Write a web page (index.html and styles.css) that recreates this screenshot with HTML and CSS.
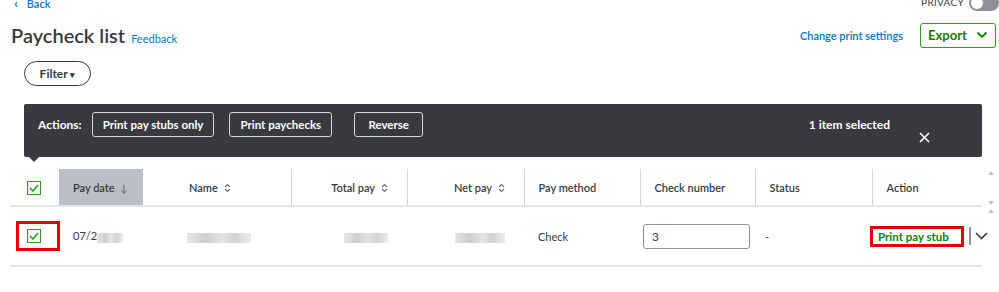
FILE: index.html
```html
<!DOCTYPE html>
<html lang="en">
<head>
    <meta charset="UTF-8">
    <title>Paycheck list</title>
    <link rel="stylesheet" href="styles.css">
</head>
<body>
    <div class="topbar">
        <a class="back-link" href="#"><span class="back-chevron">&lsaquo;</span> Back</a>
        <div class="privacy">
            <span>PRIVACY</span>
            <span class="toggle"><span class="knob"></span></span>
        </div>
    </div>

    <div class="titlebar">
        <div class="title-left">
            <h1>Paycheck list</h1>
            <a class="feedback" href="#">Feedback</a>
        </div>
        <div class="title-right">
            <a class="print-settings" href="#">Change print settings</a>
            <button class="export-btn">Export
                <svg width="12" height="8" viewBox="0 0 12 8"><path d="M1.5 1.5 L6 6 L10.5 1.5" fill="none" stroke="#108000" stroke-width="1.8"/></svg>
            </button>
        </div>
    </div>

    <div class="filter-row">
        <button class="filter-btn">Filter <span class="caret">&#9662;</span></button>
    </div>

    <!-- Batch actions bar -->
    <div class="action-bar">
        <div class="actions">
            <span class="actions-label">Actions:</span>
            <button class="bar-btn">Print pay stubs only</button>
            <button class="bar-btn gap-lg">Print paychecks</button>
            <button class="bar-btn gap-xl reverse">Reverse</button>
        </div>
        <div class="selected-info">
            <span class="selected-count">1 item selected</span>
            <span class="close-x">
                <svg width="11" height="11" viewBox="0 0 11 11"><path d="M1 1 L10 10 M10 1 L1 10" stroke="#fff" stroke-width="1.6"/></svg>
            </span>
        </div>
        <span class="pointer"></span>
    </div>

    <div class="table-wrap">
        <table class="paychecks">
            <colgroup>
                <col style="width: 49px">
                <col style="width: 84px">
                <col style="width: 148px">
                <col style="width: 116px">
                <col style="width: 117px">
                <col style="width: 116px">
                <col style="width: 115px">
                <col style="width: 117px">
                <col style="width: 110px">
            </colgroup>
            <thead>
                <tr>
                    <th class="col-check"><span class="checkbox"><svg width="10" height="8" viewBox="0 0 10 8"><path d="M1 4 L4 7 L9 1" fill="none" stroke="#2ca01c" stroke-width="1.6"/></svg></span></th>
                    <th class="sorted">Pay date <span class="sort">&darr;</span></th>
                    <th class="col-name">Name <svg class="sort-icon" width="7" height="10" viewBox="0 0 7 10"><path d="M1 4 L3.5 1.5 L6 4 M1 6 L3.5 8.5 L6 6" fill="none" stroke="#6b6c72" stroke-width="1.1"/></svg></th>
                    <th class="divider num">Total pay <svg class="sort-icon" width="7" height="10" viewBox="0 0 7 10"><path d="M1 4 L3.5 1.5 L6 4 M1 6 L3.5 8.5 L6 6" fill="none" stroke="#6b6c72" stroke-width="1.1"/></svg></th>
                    <th class="divider num">Net pay <svg class="sort-icon" width="7" height="10" viewBox="0 0 7 10"><path d="M1 4 L3.5 1.5 L6 4 M1 6 L3.5 8.5 L6 6" fill="none" stroke="#6b6c72" stroke-width="1.1"/></svg></th>
                    <th class="divider">Pay method</th>
                    <th class="divider">Check number</th>
                    <th class="divider">Status</th>
                    <th class="divider">Action</th>
                </tr>
            </thead>
            <tbody>
                <tr>
                    <td class="col-check"><span class="highlight-box"><span class="checkbox"><svg width="10" height="8" viewBox="0 0 10 8"><path d="M1 4 L4 7 L9 1" fill="none" stroke="#2ca01c" stroke-width="1.6"/></svg></span></span></td>
                    <td>07/2<span class="blur w26"></span></td>
                    <td class="col-name"><span class="blur w64"></span></td>
                    <td class="num"><span class="blur w44"></span></td>
                    <td class="num"><span class="blur w50"></span></td>
                    <td>Check</td>
                    <td class="number-cell"><input class="check-input" type="text" value="3"></td>
                    <td class="status-cell">-</td>
                    <td class="action-cell">
                        <span class="print-stub">Print pay stub</span><span class="split"></span><svg width="13" height="8" viewBox="0 0 13 8"><path d="M1 1 L6.5 6.5 L12 1" fill="none" stroke="#393a3d" stroke-width="1.6"/></svg>
                    </td>
                </tr>
            </tbody>
        </table>
        <div class="scroll-arrows">
            <span class="arr up"></span>
            <span class="arr down"></span>
            <span class="arr up"></span>
        </div>
    </div>
</body>
</html>
```

FILE: styles.css
```css
body {
    font-family: Lato, "Noto Sans", sans-serif;
    color: #393a3d;
    background-color: #fff;
    margin: 0;
    padding: 0;
    font-size: 12px;
}
a {
    text-decoration: none;
}
button {
    font-family: inherit;
    cursor: pointer;
}
.topbar {
    display: flex;
    justify-content: space-between;
    align-items: center;
    height: 10px;
    padding: 0 0 0 14px;
    margin-top: -3px;
}
.back-link {
    color: #0077c5;
    font-size: 11px;
    font-weight: 600;
}
.back-chevron {
    font-size: 14px;
    margin-right: 6px;
}
.privacy {
    display: flex;
    align-items: center;
    gap: 5px;
    font-size: 10px;
    color: #393a3d;
    letter-spacing: 0.3px;
}
.toggle {
    display: inline-block;
    width: 30px;
    height: 16px;
    border-radius: 8px;
    background-color: #8d9096;
    position: relative;
    margin-top: 2px;
}
.toggle .knob {
    position: absolute;
    left: 1px;
    top: 1px;
    width: 12px;
    height: 12px;
    border-radius: 50%;
    background-color: #fff;
    border: 1px solid #8d9096;
}
.titlebar {
    display: flex;
    justify-content: space-between;
    align-items: center;
    padding: 16px 3px 0 11px;
    height: 24px;
}
.title-left {
    display: flex;
    align-items: baseline;
    gap: 6px;
}
h1 {
    margin: 0;
    font-size: 20px;
    font-weight: 600;
    color: #393a3d;
}
.feedback {
    color: #0077c5;
    font-size: 11px;
}
.title-right {
    display: flex;
    align-items: center;
    gap: 17px;
}
.print-settings {
    color: #0077c5;
    font-size: 11px;
    font-weight: 600;
}
.export-btn {
    display: flex;
    align-items: center;
    gap: 9px;
    height: 25px;
    width: 76px;
    justify-content: center;
    background-color: #fff;
    border: 1px solid #2ca01c;
    border-radius: 3px;
    color: #108000;
    font-size: 13px;
    font-weight: 700;
    padding: 0;
}
.filter-row {
    padding: 14px 0 0 24px;
}
.filter-btn {
    height: 25px;
    width: 67px;
    background-color: #fff;
    border: 1px solid #393a3d;
    border-radius: 13px;
    font-size: 12px;
    font-weight: 700;
    color: #393a3d;
    padding: 0;
}
.caret {
    font-size: 9px;
}
.action-bar {
    position: relative;
    display: flex;
    justify-content: space-between;
    margin: 18px 17px 0 24px;
    height: 53px;
    box-sizing: border-box;
    padding: 8px 0 0 14px;
    background-color: #393a3d;
    border-radius: 2px;
    color: #fff;
}
.actions {
    display: flex;
    align-items: flex-start;
}
.actions-label {
    font-size: 12px;
    font-weight: 700;
    line-height: 25px;
    margin-right: 10px;
}
.bar-btn {
    height: 25px;
    padding: 0 10px;
    background-color: transparent;
    border: 1px solid #d4d7dc;
    border-radius: 3px;
    color: #fff;
    font-size: 11.5px;
    font-weight: 700;
}
.gap-lg {
    margin-left: 15px;
}
.gap-xl {
    margin-left: 22px;
}
.reverse {
    width: 69px;
}
.selected-info {
    display: flex;
    align-items: flex-start;
    padding-right: 52px;
}
.selected-count {
    font-size: 12px;
    font-weight: 700;
    line-height: 25px;
    margin-right: 29px;
}
.close-x {
    margin-top: 19px;
}
.pointer {
    position: absolute;
    left: 5px;
    bottom: -5px;
    width: 0;
    height: 0;
    border-left: 5px solid transparent;
    border-right: 5px solid transparent;
    border-top: 5px solid #393a3d;
}
.table-wrap {
    display: flex;
    margin: 12px 0 0 10px;
}
.paychecks {
    width: 972px;
    flex: none;
    border-collapse: collapse;
    table-layout: fixed;
}
.paychecks th {
    height: 36px;
    font-size: 11px;
    font-weight: 600;
    text-align: left;
    padding: 0 0 0 14px;
    border-bottom: 2px solid #e3e5e8;
    white-space: nowrap;
}
.paychecks th.divider {
    border-left: 1px solid #d4d7dc;
}
.paychecks td {
    height: 58px;
    font-size: 11px;
    padding: 0 0 0 14px;
    border-bottom: 2px solid #e3e5e8;
    white-space: nowrap;
}
.paychecks .num {
    text-align: right;
    padding: 0 19px 0 0;
}
.paychecks th.col-check {
    padding: 0 0 0 17px;
}
.paychecks td.col-check {
    padding: 0 0 0 6px;
}
.paychecks th.col-name {
    padding-left: 46px;
}
.paychecks td.col-name {
    padding-left: 44px;
}
.sorted {
    background-color: #babec5;
}
.sort {
    color: #6b6c72;
    font-size: 10px;
    margin-left: 3px;
}
.sort-icon {
    margin-left: 3px;
    vertical-align: -1px;
}
.checkbox {
    display: inline-flex;
    align-items: center;
    justify-content: center;
    width: 12px;
    height: 12px;
    border: 1px solid #2ca01c;
    background-color: #fff;
    vertical-align: middle;
}
.highlight-box {
    display: inline-flex;
    align-items: center;
    width: 38px;
    height: 24px;
    border: 3px solid #e00000;
}
.highlight-box .checkbox {
    margin-left: 8px;
}
.blur {
    display: inline-block;
    height: 10px;
    vertical-align: middle;
    background: linear-gradient(90deg, #e6e6e6, #cfcfcf 30%, #e4e4e4 55%, #d2d2d2 75%, #ededed);
}
.w26 { width: 26px; }
.w44 { width: 44px; }
.w50 { width: 50px; }
.w64 { width: 64px; }
.paychecks td.number-cell {
    padding-left: 3px;
}
.check-input {
    width: 107px;
    height: 25px;
    box-sizing: border-box;
    border: 1px solid #8d9096;
    border-radius: 3px;
    padding: 0 8px;
    font-family: inherit;
    font-size: 12px;
    color: #393a3d;
}
.paychecks td.status-cell {
    padding-left: 10px;
}
.paychecks td.action-cell {
    padding-left: 0;
}
.print-stub {
    display: inline-block;
    color: #108000;
    font-weight: 700;
    font-size: 11.5px;
    border: 3px solid #e00000;
    padding: 1px 12px 1px 5px;
    margin-left: -2px;
    vertical-align: middle;
}
.split {
    display: inline-block;
    width: 2px;
    height: 18px;
    background-color: #8d9096;
    margin: 0 4px 0 5px;
    vertical-align: middle;
}
.action-cell svg {
    vertical-align: middle;
}
.scroll-arrows {
    display: flex;
    flex-direction: column;
    align-items: center;
    width: 17px;
    padding-top: 2px;
}
.arr {
    width: 0;
    height: 0;
    border-left: 3px solid transparent;
    border-right: 3px solid transparent;
}
.arr.up {
    border-bottom: 4px solid #c4c4c4;
}
.arr.down {
    border-top: 4px solid #c4c4c4;
    margin-top: 26px;
}
.arr.down + .arr.up {
    margin-top: 4px;
}
```
